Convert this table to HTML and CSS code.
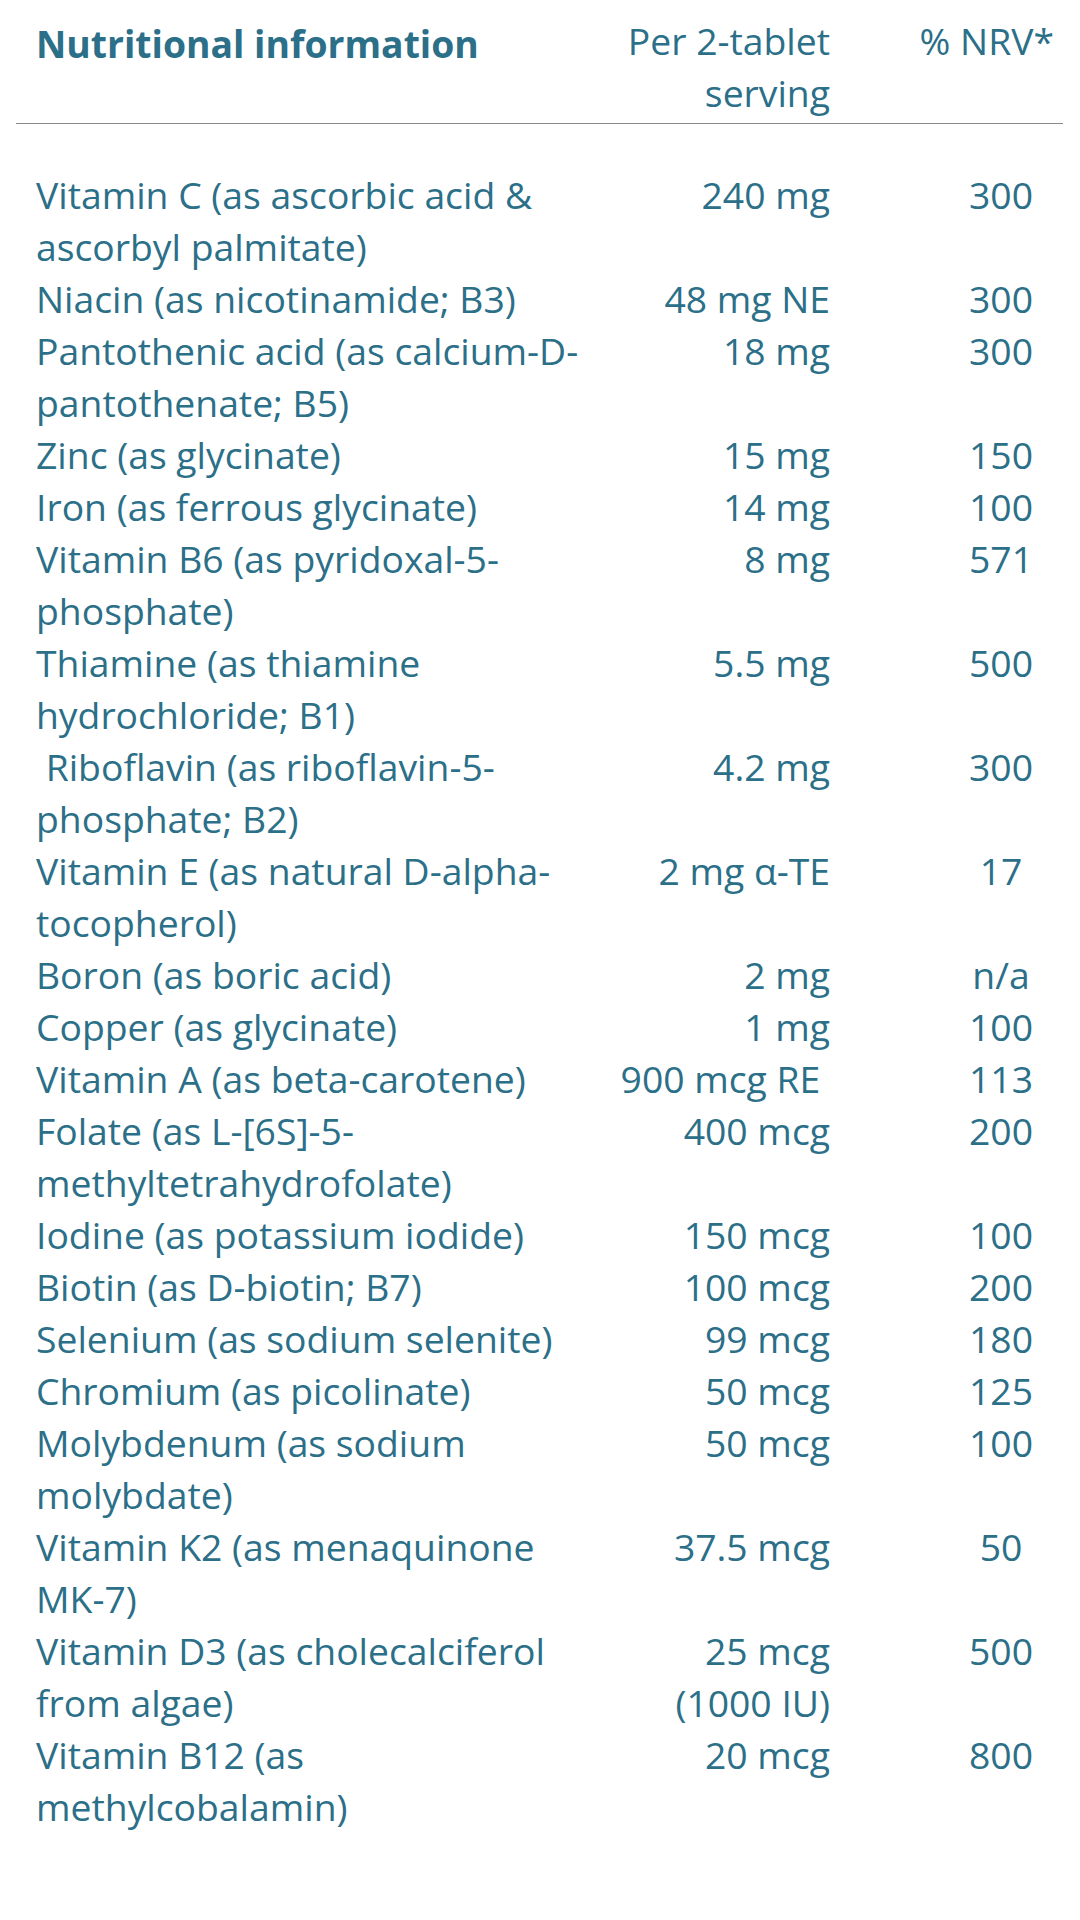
FILE: index.html
```html
<!DOCTYPE html>
<html lang="en">
<head>
<meta charset="utf-8">
<title>Nutritional information</title>
<link rel="stylesheet" href="styles.css">
</head>
<body>
<div class="table">
  <div class="head">
    <div class="c-name h-name">Nutritional information</div>
    <div class="c-qty">Per 2-tablet serving</div>
    <div class="c-nrv h-nrv">% NRV*</div>
  </div>
  <div class="body">
    <div class="c-name">Vitamin C (as ascorbic acid &amp; ascorbyl palmitate)</div><div class="c-qty">240 mg</div><div class="c-nrv">300</div>
    <div class="c-name">Niacin (as nicotinamide; B3)</div><div class="c-qty">48 mg NE</div><div class="c-nrv">300</div>
    <div class="c-name">Pantothenic acid (as calcium-D-pantothenate; B5)</div><div class="c-qty">18 mg</div><div class="c-nrv">300</div>
    <div class="c-name">Zinc (as glycinate)</div><div class="c-qty">15 mg</div><div class="c-nrv">150</div>
    <div class="c-name">Iron (as ferrous glycinate)</div><div class="c-qty">14 mg</div><div class="c-nrv">100</div>
    <div class="c-name">Vitamin B6 (as pyridoxal-5-phosphate)</div><div class="c-qty">8 mg</div><div class="c-nrv">571</div>
    <div class="c-name">Thiamine (as thiamine hydrochloride; B1)</div><div class="c-qty">5.5 mg</div><div class="c-nrv">500</div>
    <div class="c-name">&nbsp;Riboflavin (as riboflavin-5-phosphate; B2)</div><div class="c-qty">4.2 mg</div><div class="c-nrv">300</div>
    <div class="c-name">Vitamin E (as natural D-alpha-tocopherol)</div><div class="c-qty">2 mg α-TE</div><div class="c-nrv">17</div>
    <div class="c-name">Boron (as boric acid)</div><div class="c-qty">2 mg</div><div class="c-nrv">n/a</div>
    <div class="c-name">Copper (as glycinate)</div><div class="c-qty">1 mg</div><div class="c-nrv">100</div>
    <div class="c-name">Vitamin A (as beta-carotene)</div><div class="c-qty">900 mcg RE&nbsp;</div><div class="c-nrv">113</div>
    <div class="c-name">Folate (as L-[6S]-5-methyltetrahydrofolate)</div><div class="c-qty">400 mcg</div><div class="c-nrv">200</div>
    <div class="c-name">Iodine (as potassium iodide)</div><div class="c-qty">150 mcg</div><div class="c-nrv">100</div>
    <div class="c-name">Biotin (as D-biotin; B7)</div><div class="c-qty">100 mcg</div><div class="c-nrv">200</div>
    <div class="c-name">Selenium (as sodium selenite)</div><div class="c-qty">99 mcg</div><div class="c-nrv">180</div>
    <div class="c-name">Chromium (as picolinate)</div><div class="c-qty">50 mcg</div><div class="c-nrv">125</div>
    <div class="c-name">Molybdenum (as sodium molybdate)</div><div class="c-qty">50 mcg</div><div class="c-nrv">100</div>
    <div class="c-name">Vitamin K2 (as menaquinone MK-7)</div><div class="c-qty">37.5 mcg</div><div class="c-nrv">50</div>
    <div class="c-name">Vitamin D3 (as cholecalciferol from algae)</div><div class="c-qty">25 mcg (1000 IU)</div><div class="c-nrv">500</div>
    <div class="c-name">Vitamin B12 (as methylcobalamin)</div><div class="c-qty">20 mcg</div><div class="c-nrv">800</div>
  </div>
</div>
</body>
</html>
```

FILE: styles.css
```css
html, body {
  margin: 0;
  padding: 0;
  background: #ffffff;
}

body {
  font-family: "Open Sans", "Noto Sans", "Liberation Sans", sans-serif;
  font-size: 37.3px;
  line-height: 52px;
  color: #2b6f88;
}

.table {
  margin: 0 17px 0 16px;
  padding-top: 15px;
}

.head,
.body {
  display: grid;
  grid-template-columns: 584px 230px 1fr;
}

.head {
  padding-bottom: 4px;
  border-bottom: 1px solid #8a8a8a;
}

.body {
  padding-top: 45px;
}

.c-name {
  padding-left: 20px;
  padding-right: 18px;
}

.c-qty {
  text-align: right;
}

.c-nrv {
  text-align: center;
  padding-left: 121px;
  padding-right: 12px;
}

.h-name {
  font-weight: 700;
  font-size: 37.3px;
  padding-top: 3px;
}

.h-nrv {
  text-align: right;
  padding-left: 0;
  padding-right: 9px;
}
```
